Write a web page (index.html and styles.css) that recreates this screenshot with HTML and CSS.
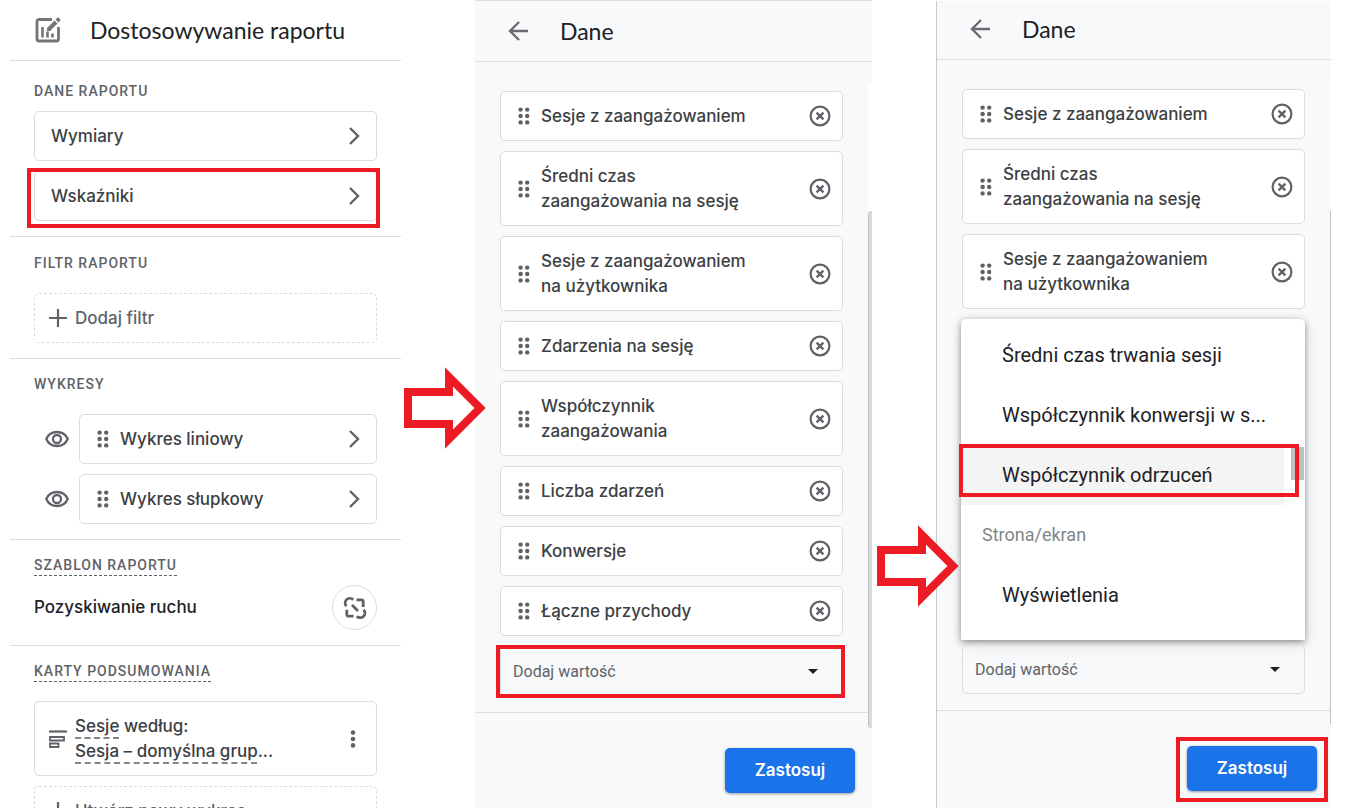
FILE: index.html
```html
<!DOCTYPE html>
<html lang="pl">
  <head>
    <meta charset="UTF-8" />
    <meta name="viewport" content="width=device-width, initial-scale=1.0" />
    <title>Dostosowywanie raportu</title>
    <link rel="stylesheet" href="styles.css">
  </head>
  <body>
    <svg class="sprite" aria-hidden="true">
      <symbol id="chevron" viewBox="0 0 12 18">
        <path d="M2 1l8 8-8 8" fill="none" stroke="#5f6368" stroke-width="2.4" />
      </symbol>
      <symbol id="dots" viewBox="0 0 12 18">
        <g fill="#5f6368">
          <circle cx="2.6" cy="2.6" r="2.2" /><circle cx="9.2" cy="2.6" r="2.2" />
          <circle cx="2.6" cy="9" r="2.2" /><circle cx="9.2" cy="9" r="2.2" />
          <circle cx="2.6" cy="15.4" r="2.2" /><circle cx="9.2" cy="15.4" r="2.2" />
        </g>
      </symbol>
      <symbol id="remove" viewBox="0 0 22 22">
        <circle cx="11" cy="11" r="9.4" fill="none" stroke="#5f6368" stroke-width="2.2" />
        <path d="M7.6 7.6l6.8 6.8M14.4 7.6l-6.8 6.8" stroke="#5f6368" stroke-width="2.3" />
      </symbol>
      <symbol id="eye" viewBox="0 0 24 18">
        <path d="M1.3 9C3.2 4.5 7.2 2 12 2s8.8 2.5 10.7 7C20.8 13.5 16.8 16 12 16S3.2 13.5 1.3 9z" fill="none" stroke="#5f6368" stroke-width="2.3" />
        <circle cx="12" cy="9" r="4" fill="none" stroke="#5f6368" stroke-width="2.3" />
      </symbol>
      <symbol id="plus" viewBox="0 0 18 18">
        <path d="M9 0v18M0 9h18" stroke="#5f6368" stroke-width="2.2" />
      </symbol>
      <symbol id="back" viewBox="0 0 20 20">
        <path d="M20 10H2M11 1l-9 9 9 9" fill="none" stroke="#6b6c6f" stroke-width="2.4" />
      </symbol>
      <symbol id="caret" viewBox="0 0 10 5">
        <path d="M0 0h10L5 5z" fill="#202124" />
      </symbol>
      <symbol id="arrow" viewBox="0 0 82 82">
        <path d="M4 25h41V10l31 31-31 31V57H4z" fill="#fff" stroke="#ed1c24" stroke-width="8" />
      </symbol>
    </svg>

    <main class="steps">
      <section class="panel report">
        <header class="panel-header">
          <svg class="header-icon" viewBox="0 0 26 26">
            <path d="M17 2.5H4A2 2 0 0 0 2 4.5V22a2 2 0 0 0 2 2h17.5a2 2 0 0 0 2-2V10" fill="none" stroke="#757575" stroke-width="2.8" />
            <path d="M7.5 10v10.5M12.5 14.5v6M17.5 16.5v4" stroke="#757575" stroke-width="2.6" />
            <path d="M12 14v-3l7.5-7.5 3 3L15 14zM20.5 2.5l1.5-1.5q1-1 2 0l1 1q1 1 0 2l-1.5 1.5z" fill="#757575" />
          </svg>
          <h1>Dostosowywanie raportu</h1>
        </header>

        <div class="group first">
          <h2>DANE RAPORTU</h2>
          <button type="button" class="card">Wymiary <svg class="chevron"><use href="#chevron" /></svg></button>
          <button type="button" class="card">Wskaźniki <svg class="chevron"><use href="#chevron" /></svg><span class="mark mark-metrics"></span></button>
        </div>

        <div class="group filter">
          <h2>FILTR RAPORTU</h2>
          <button type="button" class="card add"><svg class="plus"><use href="#plus" /></svg>Dodaj filtr</button>
        </div>

        <div class="group">
          <h2>WYKRESY</h2>
          <div class="chart-row">
            <button type="button" class="eye" aria-label="Pokaż"><svg><use href="#eye" /></svg></button>
            <button type="button" class="card"><svg class="dots"><use href="#dots" /></svg>Wykres liniowy <svg class="chevron"><use href="#chevron" /></svg></button>
          </div>
          <div class="chart-row">
            <button type="button" class="eye" aria-label="Pokaż"><svg><use href="#eye" /></svg></button>
            <button type="button" class="card"><svg class="dots"><use href="#dots" /></svg>Wykres słupkowy <svg class="chevron"><use href="#chevron" /></svg></button>
          </div>
        </div>

        <div class="group template">
          <h2><span class="hint">SZABLON RAPORTU</span></h2>
          <div class="template-row">
            <span>Pozyskiwanie ruchu</span>
            <button type="button" class="unlink" aria-label="Odłącz">
              <svg viewBox="0 0 24 24" fill="none" stroke="#5f6368" stroke-width="2.8">
                <path d="M3.4 10.2A4.6 4.6 0 1 1 10.2 3.8M13.5 3.8h5a1.7 1.7 0 0 1 1.7 1.700V11M3.800 13.800v4.700a1.700 1.700 0 0 0 1.700 1.700h5M9 9l6 6M20.600 13.800A4.600 4.600 0 1 1 13.800 20.200" />
              </svg>
            </button>
          </div>
        </div>

        <div class="group last">
          <h2><span class="hint">KARTY PODSUMOWANIA</span></h2>
          <div class="card">
            <svg class="summary-icon" viewBox="0 0 18 18" fill="none" stroke="#5f6368">
              <path d="M0 1.5h18" stroke-width="2.2" />
              <path d="M1 7h14v3.5H1zM1 13.5h8.5V17H1z" stroke-width="1.8" />
            </svg>
            <span><span class="term">Sesje</span> według:<br><span class="term">Sesja – domyślna grup</span>...</span>
            <button type="button" class="more" aria-label="Więcej">
              <svg viewBox="0 0 6 18" fill="#5f6368"><circle cx="3" cy="2.6" r="2.3" /><circle cx="3" cy="9" r="2.3" /><circle cx="3" cy="15.4" r="2.3" /></svg>
            </button>
          </div>
          <button type="button" class="card add"><svg class="plus"><use href="#plus" /></svg>Utwórz nowy wykres</button>
        </div>
      </section>

      <div class="connector"><svg class="arrow arrow-first"><use href="#arrow" /></svg></div>

      <section class="panel data">
        <header class="panel-header">
          <button type="button" class="back" aria-label="Wstecz"><svg><use href="#back" /></svg></button>
          <h1>Dane</h1>
        </header>
        <div class="metrics">
          <div class="card"><svg class="dots"><use href="#dots" /></svg>Sesje z zaangażowaniem<button type="button" class="remove" aria-label="Usuń"><svg><use href="#remove" /></svg></button></div>
          <div class="card"><svg class="dots"><use href="#dots" /></svg>Średni czas<br>zaangażowania na sesję<button type="button" class="remove" aria-label="Usuń"><svg><use href="#remove" /></svg></button></div>
          <div class="card"><svg class="dots"><use href="#dots" /></svg>Sesje z zaangażowaniem<br>na użytkownika<button type="button" class="remove" aria-label="Usuń"><svg><use href="#remove" /></svg></button></div>
          <div class="card"><svg class="dots"><use href="#dots" /></svg>Zdarzenia na sesję<button type="button" class="remove" aria-label="Usuń"><svg><use href="#remove" /></svg></button></div>
          <div class="card"><svg class="dots"><use href="#dots" /></svg>Współczynnik<br>zaangażowania<button type="button" class="remove" aria-label="Usuń"><svg><use href="#remove" /></svg></button></div>
          <div class="card"><svg class="dots"><use href="#dots" /></svg>Liczba zdarzeń<button type="button" class="remove" aria-label="Usuń"><svg><use href="#remove" /></svg></button></div>
          <div class="card"><svg class="dots"><use href="#dots" /></svg>Konwersje<button type="button" class="remove" aria-label="Usuń"><svg><use href="#remove" /></svg></button></div>
          <div class="card"><svg class="dots"><use href="#dots" /></svg>Łączne przychody<button type="button" class="remove" aria-label="Usuń"><svg><use href="#remove" /></svg></button></div>
          <div class="select">
            <select aria-label="Dodaj wartość"><option>Dodaj wartość</option></select>
            <svg class="caret"><use href="#caret" /></svg>
            <span class="mark mark-select"></span>
          </div>
        </div>
        <footer class="panel-footer"><button type="button" class="apply">Zastosuj</button></footer>
        <span class="scrollbar"></span>
      </section>

      <div class="connector"><svg class="arrow arrow-second"><use href="#arrow" /></svg></div>

      <section class="panel data open">
        <header class="panel-header">
          <button type="button" class="back" aria-label="Wstecz"><svg><use href="#back" /></svg></button>
          <h1>Dane</h1>
        </header>
        <div class="metrics">
          <div class="card"><svg class="dots"><use href="#dots" /></svg>Sesje z zaangażowaniem<button type="button" class="remove" aria-label="Usuń"><svg><use href="#remove" /></svg></button></div>
          <div class="card"><svg class="dots"><use href="#dots" /></svg>Średni czas<br>zaangażowania na sesję<button type="button" class="remove" aria-label="Usuń"><svg><use href="#remove" /></svg></button></div>
          <div class="card"><svg class="dots"><use href="#dots" /></svg>Sesje z zaangażowaniem<br>na użytkownika<button type="button" class="remove" aria-label="Usuń"><svg><use href="#remove" /></svg></button></div>
          <div class="menu" role="listbox" aria-label="Wskaźniki">
            <div class="option" role="option">Średni czas trwania sesji</div>
            <div class="option" role="option">Współczynnik konwersji w s...</div>
            <div class="option active" role="option" aria-selected="true">Współczynnik odrzuceń</div>
            <div class="option-group">Strona/ekran</div>
            <div class="option" role="option">Wyświetlenia</div>
            <span class="menu-thumb"></span>
            <span class="mark mark-option"></span>
          </div>
          <div class="select">
            <select aria-label="Dodaj wartość"><option>Dodaj wartość</option></select>
            <svg class="caret"><use href="#caret" /></svg>
          </div>
        </div>
        <footer class="panel-footer">
          <div class="apply-wrap"><button type="button" class="apply">Zastosuj</button><span class="mark mark-apply"></span></div>
        </footer>
        <span class="scrollbar"></span>
      </section>
    </main>
  </body>
</html>
```
FILE: styles.css
```css
* {
  box-sizing: border-box;
}
body {
  margin: 0;
  background: #fff;
  color: #3c4043;
  font-family: Inter, "Noto Sans", sans-serif;
  font-size: 17px;
  font-weight: 500;
  line-height: 25px;
}
button {
  font: inherit;
  color: inherit;
  background: none;
  border: none;
  padding: 0;
  cursor: pointer;
}
svg {
  display: block;
  flex: none;
}
.sprite {
  position: absolute;
  width: 0;
  height: 0;
}
.steps {
  display: grid;
  grid-template-columns: 391fr 74px 397fr 64px 395fr;
  height: 100vh;
  padding: 0 17px 0 10px;
  overflow: hidden;
}

/* panels */
.panel {
  position: relative;
  min-width: 0;
}
.data {
  background: #f8f9fb;
  border-top: 1px solid #dadce0;
  margin-bottom: 1px;
}
.data.open {
  margin-top: 1px;
  border-top: none;
  border-left: 1px solid #c8cacd;
}
.panel-header {
  display: flex;
  align-items: center;
  height: 61px;
  padding-left: 25px;
  border-bottom: 1px solid #dadce0;
}
.open .panel-header {
  height: 59px;
  padding-bottom: 2px;
}
.panel-header h1 {
  margin: 0;
  font: 400 23px/30px Lato, sans-serif;
  color: #202124;
}
.header-icon {
  width: 26px;
  height: 26px;
  margin-right: 29px;
}
.back {
  margin: 0 32px 0 8px;
}
.back svg {
  width: 20px;
  height: 20px;
}

/* cards */
.card {
  position: relative;
  display: block;
  width: 100%;
  min-height: 50px;
  padding: 12px 40px 11px;
  border: 1px solid #dadce0;
  border-radius: 5px;
  background: #fff;
  text-align: left;
}
.card .dots,
.plus,
.summary-icon,
.chevron,
.remove,
.more,
.caret {
  position: absolute;
  top: 0;
  bottom: 0;
  margin: auto 0;
}
.dots {
  left: 17px;
  width: 12px;
  height: 18px;
}
.plus,
.summary-icon {
  left: 14px;
  width: 18px;
  height: 18px;
}
.chevron {
  right: 16px;
  width: 12px;
  height: 18px;
}
.remove {
  right: 11px;
  height: 22px;
}
.remove svg {
  width: 22px;
  height: 22px;
}
.more {
  right: 20px;
  height: 18px;
}
.more svg {
  width: 6px;
  height: 18px;
}

/* report panel */
.group {
  display: flex;
  flex-direction: column;
  gap: 10px;
  padding: 15px 24px;
  border-bottom: 1px solid #dadce0;
}
.group.first {
  padding-top: 20px;
}
.group.first .card {
  padding-left: 16px;
}
.group.filter {
  padding-top: 16px;
}
.group.last {
  border-bottom: none;
}
.group h2 {
  height: 20px;
  margin: 0 0 10px;
  font: 500 14px/20px Roboto, sans-serif;
  letter-spacing: 1px;
  color: #5f6368;
}
.group.first h2,
.group.template h2 {
  margin-bottom: 0;
}
.group.last h2 {
  flex: none;
}
.hint {
  display: inline-block;
  border-bottom: 1px dashed #5f6368;
}
.card.add {
  border-style: dashed;
  color: #5f6368;
}
.chart-row {
  display: flex;
  align-items: center;
}
.eye {
  margin: 0 10px 0 11px;
}
.eye svg {
  width: 24px;
  height: 18px;
}
.template-row {
  display: flex;
  align-items: center;
  justify-content: space-between;
  color: #202124;
}
.unlink {
  display: grid;
  place-items: center;
  width: 45px;
  height: 45px;
  border: 1px solid #dadce0;
  border-radius: 50%;
}
.unlink svg {
  width: 24px;
  height: 24px;
}
.term {
  text-decoration: underline dashed #80868b 2px;
  text-underline-offset: 5px;
  text-decoration-skip-ink: none;
}

/* data panels */
.metrics {
  display: flex;
  flex-direction: column;
  gap: 10px;
  padding: 29px 29px 16px 25px;
}
.open .metrics {
  padding-right: 26px;
}
.select {
  position: relative;
}
.select select {
  display: block;
  width: 100%;
  height: 50px;
  padding: 0 12px;
  border: 1px solid #dadce0;
  border-radius: 5px;
  background: transparent;
  appearance: none;
  font: 400 16px Roboto, sans-serif;
  color: #5f6368;
}
.caret {
  right: 25px;
  width: 10px;
  height: 5px;
}
.panel-footer {
  display: flex;
  justify-content: flex-end;
  padding: 35px 17px 0 0;
  border-top: 1px solid #dadce0;
}
.open .panel-footer {
  padding-right: 14px;
}
.apply {
  width: 130px;
  height: 45px;
  border-radius: 5px;
  background: #1a73e8;
  box-shadow: 0 1px 3px rgba(0, 0, 0, 0.4);
  color: #fff;
  font-weight: 600;
}
.apply-wrap {
  position: relative;
}
.scrollbar {
  position: absolute;
  top: 210px;
  right: 0;
  width: 4px;
  height: 517px;
  border-left: 1px solid #bdc1c6;
  border-radius: 4px 0 0 4px;
  background: #dadce0;
}
.open .scrollbar {
  width: 1px;
  height: 513px;
  border-radius: 0;
}
/* empty track above the thumb */
.scrollbar::before {
  content: "";
  position: absolute;
  right: 0;
  bottom: 100%;
  width: 4px;
  height: 129px;
  background: #fff;
}
.open .scrollbar::before {
  width: 1px;
}

/* open drop-down */
.menu {
  position: relative;
  height: 321px;
  margin: 0 0 -6px -1px;
  padding-top: 6px;
  border-radius: 5px 5px 0 0;
  background: #fff;
  box-shadow: 0 2px 6px rgba(0, 0, 0, 0.4), 0 4px 16px rgba(0, 0, 0, 0.1);
  font: 400 20px/60px Roboto, sans-serif;
  color: #202124;
}
.option {
  margin-right: 21px;
  padding-left: 41px;
  white-space: nowrap;
}
.option.active {
  background: #f4f4f4;
}
.option-group {
  padding-left: 21px;
  font-size: 18px;
  color: #80868b;
}
.menu-thumb {
  position: absolute;
  top: 128px;
  right: 1px;
  width: 13px;
  height: 33px;
  background: #c1c1c1;
}

/* red markings */
.mark {
  position: absolute;
  border: 4px solid #ed1c24;
  pointer-events: none;
}
.mark-metrics {
  inset: -4px -4px -8px -8px;
}
.mark-select {
  inset: -1px -2px -2px -4px;
}
.mark-option {
  top: 125px;
  right: 6px;
  left: -2px;
  height: 53px;
}
.mark-apply {
  inset: -9px -11px -11px;
}
.connector {
  position: relative;
  z-index: 1;
}
.arrow {
  position: absolute;
  left: 3px;
  width: 82px;
  height: 82px;
}
.arrow-first {
  top: 367px;
}
.arrow-second {
  top: 525px;
  left: 5px;
}
```
